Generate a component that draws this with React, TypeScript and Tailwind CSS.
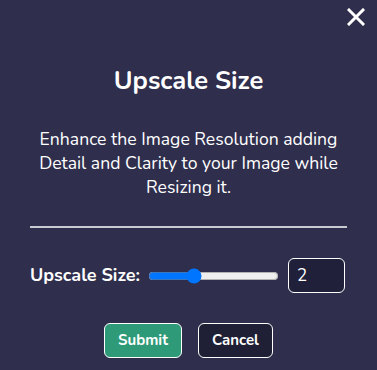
import React, { useState } from 'react';

const App: React.FC = () => {
  const [size, setSize] = useState(2);

  return (
    <div className="relative w-[377px] h-[370px] bg-[#2f2e4d] text-white font-['Nunito','Lato','Open_Sans',sans-serif] overflow-hidden">
      {/* Close */}
      <button className="absolute top-[6px] right-[10px] w-[22px] h-[22px] flex items-center justify-center">
        <svg width="18" height="18" viewBox="0 0 18 18" fill="none">
          <path d="M2 2 L16 16 M16 2 L2 16" stroke="white" strokeWidth="3" strokeLinecap="square" />
        </svg>
      </button>

      <div className="flex flex-col items-center px-[30px] pt-[65px]">
        <h2 className="text-[25.5px] leading-8 font-bold">Upscale Size</h2>

        <p className="mt-[30px] text-[17.6px] leading-6 text-center">
          Enhance the Image Resolution adding Detail and Clarity to your Image while Resizing it.
        </p>

        <div className="mt-[27px] w-full h-[2px] bg-[#c9c9d2]" />

        {/* Upscale row */}
        <div className="mt-[30px] w-full flex items-center">
          <label className="text-[18px] font-bold mr-[8px]">Upscale Size:</label>
          <input
            type="range"
            min={1}
            max={4}
            step={1}
            value={size}
            onChange={(e) => setSize(Number(e.target.value))}
            className="w-[131px]"
          />
          <input
            type="text"
            value={size}
            onChange={(e) => setSize(Number(e.target.value) || 0)}
            className="ml-[9px] w-[57px] h-[35px] rounded-md border border-white bg-[#20203a] px-[8px] text-[17px] text-white outline-none"
          />
        </div>

        {/* Actions */}
        <div className="mt-[30px] flex items-center gap-4">
          <button className="w-[78px] h-[35px] rounded-md border border-white bg-[#2e9a78] text-[15px] font-bold">
            Submit
          </button>
          <button className="w-[75px] h-[35px] rounded-md border border-white bg-[#1f1f35] text-[15px] font-bold">
            Cancel
          </button>
        </div>
      </div>
    </div>
  );
};

export default App;
